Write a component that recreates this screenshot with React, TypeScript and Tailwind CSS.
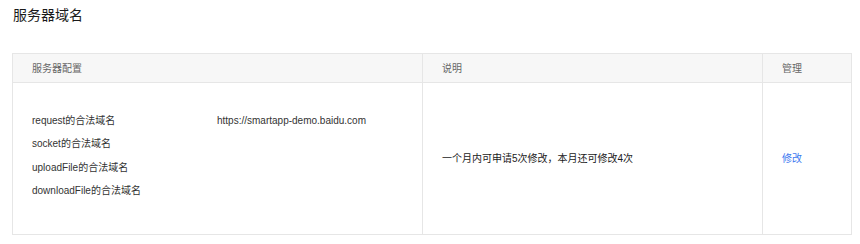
const rows = ['request的合法域名', 'socket的合法域名', 'uploadFile的合法域名', 'downloadFile的合法域名']

const App = () => {
  return (
    <div
      className="w-[860px] h-[244px] bg-white text-[#333] overflow-hidden"
      style={{ fontFamily: '"Liberation Sans", "Noto Sans CJK SC", sans-serif' }}
    >
      <h1 className="pl-[13px] pt-[5px] text-[14px] leading-[20px] text-[#1a1a1a]">服务器域名</h1>

      <div className="mx-[12px] mt-[28px] w-[840px] border border-[#e6e6e6] text-[10px]">
        {/* header */}
        <div className="flex h-[29px] bg-[#f7f7f7] border-b border-[#e6e6e6] text-[#666]">
          <div className="w-[409px] pl-[19px] flex items-center">服务器配置</div>
          <div className="w-[340px] pl-[19px] flex items-center border-l border-[#e6e6e6]">说明</div>
          <div className="flex-1 pl-[19px] flex items-center border-l border-[#e6e6e6]">管理</div>
        </div>

        {/* body */}
        <div className="flex h-[151px]">
          <div className="w-[409px] pl-[19px] pt-[26px] flex">
            <div className="w-[185px]">
              {rows.map((r) => (
                <div key={r} className="leading-[23.3px]">
                  {r}
                </div>
              ))}
            </div>
            <div className="leading-[23.3px]">https://smartapp-demo.baidu.com</div>
          </div>
          <div className="w-[340px] pl-[19px] flex items-center border-l border-[#e6e6e6] text-[#1a1a1a]">
            一个月内可申请5次修改，本月还可修改4次
          </div>
          <div className="flex-1 pl-[19px] flex items-center border-l border-[#e6e6e6]">
            <a className="text-[#3c78f0] cursor-pointer">修改</a>
          </div>
        </div>
      </div>
    </div>
  )
}

export default App
